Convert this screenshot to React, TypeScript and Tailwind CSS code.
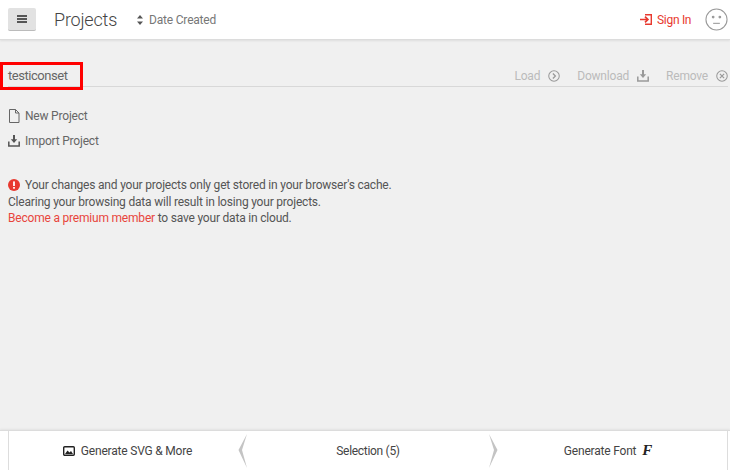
import React from "react";

function Doc() {
  return (
    <svg width="12" height="14" viewBox="0 0 12 14" fill="none" stroke="#666" strokeWidth="1">
      <path d="M1.5 .5h6l3.5 3.5v9.5h-9.5z M7.5 .5v3.5h3.5" />
    </svg>
  );
}
function Tray({ c = "#555" }: { c?: string }) {
  return (
    <svg width="12" height="12" viewBox="0 0 12 12" fill="none" stroke={c} strokeWidth="1.5">
      <path d="M.8 6.5v4.6h10.4V6.5" />
      <path d="M6 0v5" strokeWidth="2" />
      <path d="M2.8 4.2h6.4L6 8z" fill={c} stroke="none" />
    </svg>
  );
}

export default function App() {
  return (
    <div className="w-[730px] h-[470px] flex flex-col bg-[#f0f0f0] overflow-hidden font-['Roboto',sans-serif] text-[#555] text-[12px] tracking-[-0.2px]">
      <header className="h-[40px] shrink-0 bg-white flex items-center border-b border-[#dcdcdc] shadow-[0_1px_2px_rgba(0,0,0,0.08)] pl-[8px] pr-[2px]">
        <button className="w-[28px] h-[23px] bg-[#e2e2e2] rounded-[2px] border-b border-[#bbb] flex flex-col items-center justify-center gap-[1px]">
          <span className="w-[10px] h-[2px] bg-[#555]" />
          <span className="w-[10px] h-[2px] bg-[#555]" />
          <span className="w-[10px] h-[2px] bg-[#555]" />
        </button>
        <h1 className="ml-[18px] text-[18px] font-light text-[#444] tracking-[-0.2px]">Projects</h1>
        <svg className="ml-[20px]" width="6" height="10" viewBox="0 0 6 10" fill="#555">
          <path d="M3 0l3 3.6H0zM3 10L0 6.4h6z" />
        </svg>
        <span className="ml-[6px] text-[#777]">Date Created</span>
        <div className="ml-auto flex items-center">
          <svg width="12" height="11" viewBox="0 0 12 11" fill="none" stroke="#e8392f" strokeWidth="1.4">
            <path d="M5 .7h6.3v9.6H5" />
            <path d="M0 5.5h7.5M5 2.6l2.9 2.9L5 8.4" strokeWidth="1.7" />
          </svg>
          <span className="ml-[5px] text-[#e8392f] w-[34px] whitespace-nowrap tracking-[-0.3px]">Sign In</span>
          <svg className="ml-[14px]" width="23" height="23" viewBox="0 0 24 24" fill="none" stroke="#999" strokeWidth="1.1">
            <circle cx="12" cy="12" r="11" />
            <circle cx="8.5" cy="9.5" r="0.9" fill="#999" />
            <circle cx="15.5" cy="9.5" r="0.9" fill="#999" />
            <path d="M8.5 16h7" />
          </svg>
        </div>
      </header>

      <main className="flex-1 pl-[8px] pr-[2px]">
        <div className="mt-[24px] h-[23px] flex items-center border-b border-[#d8d8d8] relative">
          <span className="text-[13px] text-[#666] tracking-[-0.45px] mt-[2px]">testiconset</span>
          <span className="absolute left-[-8px] top-[-2px] w-[83px] h-[28px] border-[3px] border-[#f00]" />
          <div className="ml-auto flex items-center text-[#bbb] mt-[2px]">
            <span>Load</span>
            <svg className="ml-[8px]" width="12" height="12" viewBox="0 0 13 13" fill="none" stroke="#999" strokeWidth="1.1">
              <circle cx="6.5" cy="6.5" r="5.7" />
              <path d="M5.3 3.8l2.7 2.7-2.7 2.7" strokeWidth="1.4" />
            </svg>
            <span className="ml-[17px]">Download</span>
            <span className="ml-[8px] flex"><Tray c="#999" /></span>
            <span className="ml-[17px]">Remove</span>
            <svg className="ml-[8px]" width="12" height="12" viewBox="0 0 13 13" fill="none" stroke="#999" strokeWidth="1.1">
              <circle cx="6.5" cy="6.5" r="5.7" />
              <path d="M4.2 4.2l4.6 4.6M8.8 4.2l-4.6 4.6" strokeWidth="1.3" />
            </svg>
          </div>
        </div>

        <div className="mt-[19px] flex items-center h-[20px] gap-[5px]">
          <span className="w-[12px] flex"><Doc /></span>
          <span className="text-[#666]">New Project</span>
        </div>
        <div className="mt-[5px] flex items-center h-[20px] gap-[5px]">
          <span className="w-[12px] flex"><Tray /></span>
          <span className="text-[#666]">Import Project</span>
        </div>

        <div className="mt-[26px] leading-[16.6px] text-[#555]">
          <div className="flex items-center gap-[5px]">
            <svg width="12" height="12" viewBox="0 0 12 12">
              <circle cx="6" cy="6" r="6" fill="#e8392f" />
              <rect x="5.1" y="2.4" width="1.8" height="4.6" fill="#fff" />
              <rect x="5.1" y="8" width="1.8" height="1.7" fill="#fff" />
            </svg>
            <span>Your changes and your projects only get stored in your browser's cache.</span>
          </div>
          <div>Clearing your browsing data will result in losing your projects.</div>
          <div>
            <span className="text-[#e8453c]">Become a premium member</span> to save your data in cloud.
          </div>
        </div>
      </main>

      <footer className="h-[40px] shrink-0 bg-white border-t border-[#dcdcdc] shadow-[0_-1px_2px_rgba(0,0,0,0.06)] flex items-center text-[#444]">
        <div className="w-[8px] h-full" />
        <div className="w-[230px] h-full border-l border-[#ddd] flex items-center justify-center gap-[6px] pl-[8px]">
          <svg width="12" height="10" viewBox="0 0 12 10">
            <rect x="0.7" y="0.7" width="10.6" height="8.6" rx="1" fill="#fff" stroke="#222" strokeWidth="1.4" />
            <path d="M2 8l2.5-3.5 2 2L8 5l2 3z" fill="#222" />
          </svg>
          <span>Generate SVG &amp; More</span>
        </div>
        <svg width="10" height="34" viewBox="0 0 10 34" fill="none"><path d="M9 0L0.5 16 9 34 4 16z" fill="#c4c4c4" /></svg>
        <div className="flex-1 h-full flex items-center justify-center tracking-[-0.3px]">Selection (5)</div>
        <svg width="10" height="34" viewBox="0 0 10 34" fill="none"><path d="M1 0l8.5 16L1 34l5-18z" fill="#c4c4c4" /></svg>
        <div className="w-[230px] h-full border-r border-[#ddd] flex items-center justify-center gap-[6px] pr-[9px]">
          <span>Generate Font</span>
          <span className="font-['Liberation_Serif',serif] italic font-bold text-[15px] text-[#222] leading-none">F</span>
        </div>
        <div className="w-[2px] h-full" />
      </footer>
    </div>
  );
}
